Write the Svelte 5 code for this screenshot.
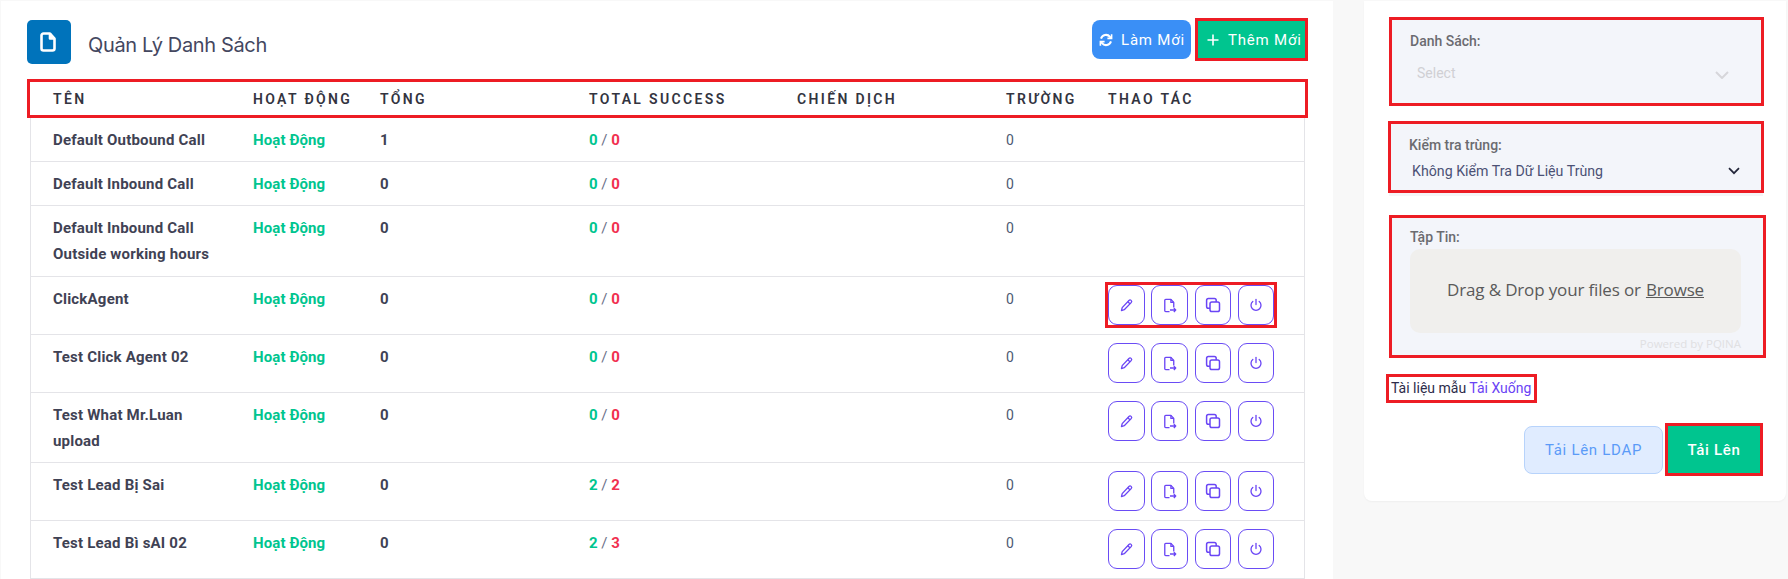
<script>
	const rows = [
		{ name: 'Default Outbound Call', total: 1, ok: 0, fail: 0, fields: 0 },
		{ name: 'Default Inbound Call', total: 0, ok: 0, fail: 0, fields: 0 },
		{ name: 'Default Inbound Call Outside working hours', total: 0, ok: 0, fail: 0, fields: 0, loose: true },
		{ name: 'ClickAgent', total: 0, ok: 0, fail: 0, fields: 0, actions: true, marked: true },
		{ name: 'Test Click Agent 02', total: 0, ok: 0, fail: 0, fields: 0, actions: true },
		{ name: 'Test What Mr.Luan upload', total: 0, ok: 0, fail: 0, fields: 0, actions: true },
		{ name: 'Test Lead Bị Sai', total: 0, ok: 2, fail: 2, fields: 0, actions: true },
		{ name: 'Test Lead Bì sAI 02', total: 0, ok: 2, fail: 3, fields: 0, actions: true }
	];

	const columns = ['Tên', 'Hoạt Động', 'Tổng', 'Total Success', 'Chiến Dịch', 'Trường', 'Thao Tác'];
</script>

<div class="page">
	<main class="panel">
		<header class="top">
			<div class="title">
				<span class="title-icon">
					<svg width="20" height="22" viewBox="0 0 20 22" fill="none" stroke="#fff" stroke-width="2.6" stroke-linejoin="round">
						<path d="M4.5 2.5h6.5l4.5 5v10a2 2 0 0 1-2 2h-9a2 2 0 0 1-2-2v-13a2 2 0 0 1 2-2z" />
						<path d="M11 2.5v5h4.5" fill="#fff" />
					</svg>
				</span>
				<h1>Quản Lý Danh Sách</h1>
			</div>
			<div class="top-actions">
				<button class="btn btn-blue">
					<svg width="14" height="14" viewBox="0 0 14 14" fill="none" stroke="#fff" stroke-width="2">
						<path d="M2 5.6a5.2 5.2 0 0 1 9-1.8l1 1.2" />
						<path d="M12 8.4a5.2 5.2 0 0 1-9 1.8l-1-1.2" />
						<path d="M12.6 1.2v4.2H8.4" stroke-width="1.6" />
						<path d="M1.4 12.8V8.6h4.2" stroke-width="1.6" />
					</svg>
					Làm Mới
				</button>
				<button class="btn btn-green marked">
					<svg width="12" height="12" viewBox="0 0 12 12" stroke="#fff" stroke-width="1.6">
						<path d="M6 .5v11M.5 6h11" />
					</svg>
					Thêm Mới
				</button>
			</div>
		</header>

		<div class="head grid">
			{#each columns as col}
				<span>{col}</span>
			{/each}
		</div>

		<div class="rows">
			{#each rows as row}
				<div class="row grid" class:loose={row.loose}>
					<div class="name">{row.name}</div>
					<div class="status">Hoạt Động</div>
					<div class="total">{row.total}</div>
					<div class="ratio"><b class="ok">{row.ok}</b> / <b class="fail">{row.fail}</b></div>
					<div></div>
					<div class="fields">{row.fields}</div>
					{#if row.actions}
						<div class="actions" class:marked={row.marked}>
							<button class="icon-btn" aria-label="Sửa">
								<svg width="15" height="15" viewBox="0 0 16 16" fill="none" stroke="#6a45f5" stroke-width="1.4" stroke-linejoin="round">
									<path d="M10.6 2.6a1.6 1.6 0 0 1 2.4 2.3l-7.4 7.6-3 .9.8-3.1z" />
									<path d="M9.4 3.9l2.5 2.4" />
								</svg>
							</button>
							<button class="icon-btn" aria-label="Tải tệp">
								<svg width="17" height="17" viewBox="0 0 18 18" fill="none" stroke="#6a45f5" stroke-width="1.4" stroke-linejoin="round">
									<path d="M9 15.5H5a1 1 0 0 1-1-1v-11a1 1 0 0 1 1-1h5.5l3 3.2v5.3" />
									<path d="M10.5 2.5v3.2h3" />
									<path d="M9.5 13.8h6M13.6 11.8l2 2-2 2" />
								</svg>
							</button>
							<button class="icon-btn" aria-label="Sao chép">
								<svg width="16" height="16" viewBox="0 0 16 16" fill="none" stroke="#6a45f5" stroke-width="1.5">
									<rect x="5" y="5" width="9.5" height="9.5" rx="1.8" />
									<path d="M5 11.2H3.4a1.8 1.8 0 0 1-1.8-1.8V3.4a1.8 1.8 0 0 1 1.8-1.8h6a1.8 1.8 0 0 1 1.8 1.8V5" />
								</svg>
							</button>
							<button class="icon-btn" aria-label="Tắt">
								<svg width="14" height="14" viewBox="0 0 14 14" fill="none" stroke="#6a45f5" stroke-width="1.3" stroke-linecap="round">
									<path d="M7 1.5v5" />
									<path d="M10.2 3.5a5 5 0 1 1-6.4 0" />
								</svg>
							</button>
						</div>
					{/if}
				</div>
			{/each}
		</div>
	</main>

	<aside class="side">
		<section class="field field-list">
			<span class="label">Danh Sách:</span>
			<div class="picker">
				<span>Select</span>
				<svg width="14" height="8" viewBox="0 0 14 8" fill="none" stroke="#d6d6da" stroke-width="2">
					<path d="M1 1l6 6 6-6" />
				</svg>
			</div>
		</section>

		<section class="field field-dup">
			<span class="label">Kiểm tra trùng:</span>
			<div class="native">
				<span>Không Kiểm Tra Dữ Liệu Trùng</span>
				<svg width="12" height="8" viewBox="0 0 12 8" fill="none" stroke="#23263a" stroke-width="1.7">
					<path d="M1 1.2l5 5 5-5" />
				</svg>
			</div>
		</section>

		<section class="field field-file">
			<span class="label">Tập Tin:</span>
			<div class="drop">Drag &amp; Drop your files or <u>Browse</u></div>
			<div class="credit">Powered by PQINA</div>
		</section>

		<p class="sample">Tài liệu mẫu <a href="#top">Tải Xuống</a></p>

		<div class="side-actions">
			<button class="ldap">Tải Lên LDAP</button>
			<button class="upload">Tải Lên</button>
		</div>
	</aside>
</div>

<style>
	:global(body) {
		margin: 0;
		background: #f8f8f8;
		overflow: hidden;
	}

	.page {
		display: flex;
		align-items: flex-start;
		height: 578px;
		padding: 1px 2px 0 1px;
		font-family: Roboto, sans-serif;
		font-size: 14px;
		color: #3f4254;
	}

	.panel {
		width: 1332px;
		height: 578px;
		flex-shrink: 0;
		box-sizing: border-box;
		padding: 19px 0 0 26px;
		background: #fff;
		overflow: hidden;
	}

	.top {
		display: flex;
		justify-content: space-between;
		width: 1278px;
		margin-bottom: 15px;
	}

	.title {
		display: flex;
		align-items: center;
		gap: 17px;
	}

	.title-icon {
		display: flex;
		align-items: center;
		justify-content: center;
		width: 44px;
		height: 44px;
		background: #0073bb;
		border-radius: 5px;
	}

	h1 {
		margin: 5px 0 0;
		font-family: Inter, sans-serif;
		font-size: 20px;
		font-weight: 400;
		letter-spacing: -0.35px;
		color: #44475f;
	}

	.top-actions {
		display: flex;
		align-items: center;
		gap: 7px;
		height: 39px;
	}

	.btn {
		display: flex;
		align-items: center;
		border: 0;
		color: #fff;
		font-family: Roboto, sans-serif;
		font-size: 15px;
		font-weight: 400;
		letter-spacing: 0.8px;
	}

	.btn-blue {
		gap: 8px;
		width: 99px;
		height: 39px;
		padding: 0 0 0 7px;
		background: #3a8ff6;
		border-radius: 8px;
	}

	.btn-green {
		gap: 9px;
		width: 107px;
		height: 37px;
		padding: 0 0 0 9px;
		background: #00c58f;
	}

	.marked {
		outline: 3px solid #ed1c24;
	}

	.grid {
		display: grid;
		grid-template-columns: 200px 127px 209px 208px 209px 102px 1fr;
	}

	.head {
		box-sizing: border-box;
		width: 1281px;
		height: 39px;
		padding-left: 23px;
		align-items: center;
		border: 3px solid #ed1c24;
		font-size: 14px;
		font-weight: 600;
		letter-spacing: 2.35px;
		text-transform: uppercase;
		color: #33343f;
	}

	.rows {
		width: 1273px;
		margin-left: 3px;
		border-left: 1px solid #e4e4e8;
		border-right: 1px solid #e4e4e8;
	}

	.row {
		padding-left: 22px;
		border-bottom: 1px solid #e4e4e8;
		font-size: 15px;
		line-height: 26px;
	}

	.row > div {
		padding: 9px 0 8px;
	}

	.row.loose > div {
		padding-bottom: 9px;
	}

	.row > .name {
		padding-right: 26px;
		font-weight: 700;
		letter-spacing: 0.2px;
	}

	.status {
		font-weight: 700;
		letter-spacing: 0.1px;
		color: #00c58f;
	}

	.total {
		font-weight: 700;
	}

	.ratio {
		color: #6b7088;
	}

	.ok {
		color: #00c58f;
	}

	.fail {
		color: #f1304f;
	}

	.fields {
		font-size: 14px;
		color: #4d5a73;
	}

	.row > .actions {
		display: flex;
		gap: 6.83px;
		align-self: start;
		justify-self: start;
		margin-top: 8px;
		margin-bottom: 9px;
		padding: 0;
	}

	.icon-btn {
		display: flex;
		align-items: center;
		justify-content: center;
		width: 36.5px;
		height: 40px;
		padding: 0;
		background: #fff;
		border: 1.5px solid #6a4cf5;
		border-radius: 9px;
	}

	.side {
		box-sizing: border-box;
		width: 422px;
		height: 500px;
		margin-left: 31px;
		padding: 16px 22px 0 25px;
		background: #fff;
		border-radius: 0 0 8px 8px;
		box-shadow: 0 1px 2px rgba(0, 0, 0, 0.04);
		flex-shrink: 0;
	}

	.field {
		box-sizing: border-box;
		width: 375px;
		padding: 0 18px;
		background: #f3f5fa;
		border: 3px solid #ed1c24;
	}

	.label {
		display: block;
		font-weight: 500;
		color: #6b6b70;
	}

	.field-list {
		height: 89px;
		margin-bottom: 15px;
		padding-top: 13px;
	}

	.picker {
		display: flex;
		justify-content: space-between;
		align-items: center;
		padding: 16px 14px 0 7px;
		color: #d0d0d4;
	}

	.picker svg {
		margin-top: 4px;
	}

	.field-dup {
		height: 72px;
		margin: 0 0 22px -1px;
		padding-top: 13px;
		width: 376px;
		box-shadow: 0 4px 0 -1px #f5f5f7;
	}

	.native {
		display: flex;
		justify-content: space-between;
		align-items: center;
		margin-top: 10px;
		padding: 0 3px 0 3px;
		font-size: 14.2px;
		color: #4b5175;
	}

	.field-file {
		width: 377px;
		height: 143px;
		padding-top: 11px;
	}

	.drop {
		display: flex;
		align-items: center;
		justify-content: center;
		gap: 0.3em;
		width: 331px;
		height: 84px;
		margin-top: 4px;
		padding-bottom: 3px;
		box-sizing: border-box;
		background: #f0efed;
		border-radius: 10px;
		font-family: 'Open Sans', sans-serif;
		font-size: 17px;
		letter-spacing: -0.15px;
		color: #5a5a5a;
	}

	.credit {
		width: 331px;
		margin-top: 3px;
		font-family: 'Open Sans', sans-serif;
		font-size: 11.5px;
		text-align: right;
		color: #e0e0e2;
	}

	.sample {
		box-sizing: border-box;
		width: 151px;
		height: 29px;
		margin: 16px 0 23px -3px;
		padding-left: 2px;
		line-height: 23px;
		border: 3px solid #ed1c24;
		color: #2d2b4a;
		white-space: nowrap;
	}

	.sample a {
		color: #6a43f5;
		text-decoration: none;
	}

	.side-actions {
		display: flex;
		align-items: flex-start;
		gap: 5px;
		margin-left: 135px;
	}

	.ldap,
	.upload {
		font-family: Roboto, sans-serif;
		font-size: 15px;
		letter-spacing: 0.7px;
	}

	.ldap {
		width: 139px;
		height: 48px;
		background: #e0ecff;
		border: 1px solid #b7d3fb;
		border-radius: 8px;
		font-weight: 400;
		color: #5b9bf8;
	}

	.upload {
		width: 92px;
		height: 47px;
		background: #00c58f;
		border: 0;
		outline: 3px solid #ed1c24;
		font-weight: 500;
		color: #fff;
	}
</style>
